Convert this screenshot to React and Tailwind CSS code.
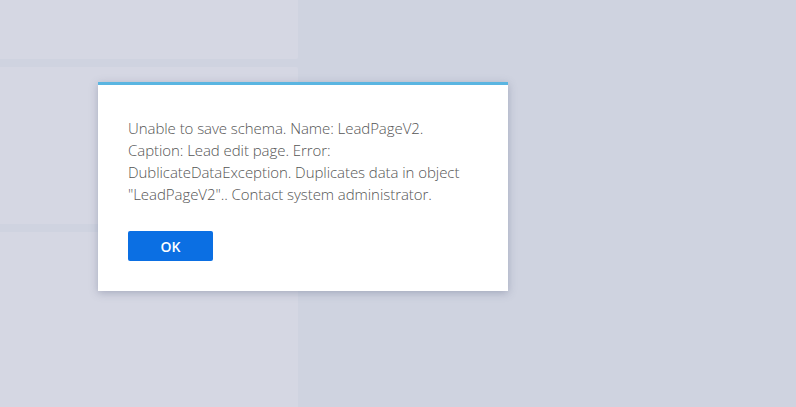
export default function App() {
    return (
        <div className="relative w-[796px] h-[407px] overflow-hidden bg-[#cfd3e0] font-['Open_Sans',sans-serif]">
            {/* left column with stacked panels */}
            <div className="flex flex-col w-[298px] h-full gap-[8px]">
                <div className="h-[59px] bg-[#d5d7e3] rounded-br-[2px]"></div>
                <div className="h-[157px] bg-[#d5d7e3] rounded-r-[2px]"></div>
                <div className="flex-1 bg-[#d5d7e3]"></div>
            </div>

            {/* message box */}
            <div className="absolute left-[98px] top-[82px] w-[410px] h-[209px] bg-white border-t-[3px] border-[#5ab5e1] shadow-[0_2px_8px_rgba(80,90,120,0.35)]">
                <div className="px-[30px] pt-[32px]">
                    <p className="text-[15px] leading-[22px] font-light text-[#555] tracking-[-0.06px]">
                        Unable to save schema. Name: LeadPageV2. Caption: Lead edit page. Error: DublicateDataException. Duplicates data in object "LeadPageV2".. Contact system administrator.
                    </p>
                    <button className="mt-[26px] w-[85px] h-[30px] bg-[#0b6fe3] rounded-[2px] text-white text-[14px] font-semibold">
                        OK
                    </button>
                </div>
            </div>
        </div>
    );
}
